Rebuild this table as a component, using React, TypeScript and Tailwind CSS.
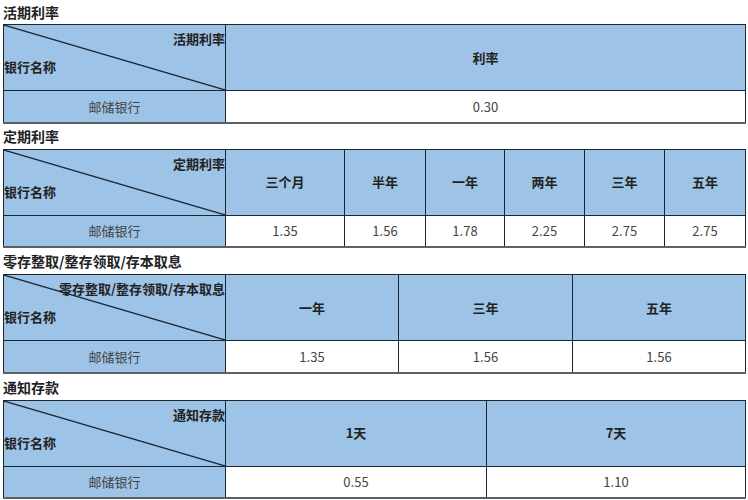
const BORDER = 'border border-[#1b2633]';
const HEAD = 'bg-[#9dc3e6]';

type Section = {
  title: string;
  corner: string;
  cols: { label: string; w: number }[];
  values: string[];
  gap: string;
};

const sections: Section[] = [
  {
    title: '活期利率',
    corner: '活期利率',
    cols: [{ label: '利率', w: 520 }],
    values: ['0.30'],
    gap: 'h-6',
  },
  {
    title: '定期利率',
    corner: '定期利率',
    cols: [
      { label: '三个月', w: 119 },
      { label: '半年', w: 81 },
      { label: '一年', w: 79 },
      { label: '两年', w: 80 },
      { label: '三年', w: 80 },
      { label: '五年', w: 81 },
    ],
    values: ['1.35', '1.56', '1.78', '2.25', '2.75', '2.75'],
    gap: 'h-[25px]',
  },
  {
    title: '零存整取/整存领取/存本取息',
    corner: '零存整取/整存领取/存本取息',
    cols: [
      { label: '一年', w: 173 },
      { label: '三年', w: 174 },
      { label: '五年', w: 173 },
    ],
    values: ['1.35', '1.56', '1.56'],
    gap: 'h-[26px]',
  },
  {
    title: '通知存款',
    corner: '通知存款',
    cols: [
      { label: '1天', w: 261 },
      { label: '7天', w: 259 },
    ],
    values: ['0.55', '1.10'],
    gap: 'h-[26px]',
  },
];

function RateTable({ s }: { s: Section }) {
  return (
    <table className="table-fixed border-collapse w-[742px] ml-[3px] text-[13px] border-b-2 border-b-[#5a6066]">
      <colgroup>
        <col style={{ width: 222 }} />
        {s.cols.map((c) => (
          <col key={c.label} style={{ width: c.w }} />
        ))}
      </colgroup>
      <tbody>
        <tr className="h-[65px]">
          <td className={`${BORDER} ${HEAD} relative p-0 align-top`}>
            <svg className="absolute inset-0 w-full h-full" preserveAspectRatio="none" viewBox="0 0 100 100">
              <line x1="0" y1="0" x2="100" y2="100" stroke="#1b2633" strokeWidth="1.2" vectorEffect="non-scaling-stroke" />
            </svg>
            <div className="relative flex flex-col h-[65px] font-bold text-[#222]">
              <div className="text-right leading-none pt-[7px] pr-0">{s.corner}</div>
              <div className="text-left leading-none pt-[15px]">银行名称</div>
            </div>
          </td>
          {s.cols.map((c) => (
            <td key={c.label} className={`${BORDER} ${HEAD} text-center font-bold text-[#222]`}>
              {c.label}
            </td>
          ))}
        </tr>
        <tr className="h-[32px]">
          <td className={`${BORDER} ${HEAD} text-center text-[#444]`}>邮储银行</td>
          {s.values.map((v, i) => (
            <td key={i} className={`${BORDER} bg-white text-center text-[#444]`}>
              {v}
            </td>
          ))}
        </tr>
      </tbody>
    </table>
  );
}

export default function App() {
  return (
    <div className="w-[748px] h-[500px] overflow-hidden bg-white font-['Noto_Sans_CJK_SC','Microsoft_YaHei',sans-serif]">
      {sections.map((s) => (
        <div key={s.title}>
          <div className={`${s.gap} flex items-center pl-[3px] text-[14px] font-bold text-[#222] leading-none`}>
            {s.title}
          </div>
          <RateTable s={s} />
        </div>
      ))}
    </div>
  );
}
